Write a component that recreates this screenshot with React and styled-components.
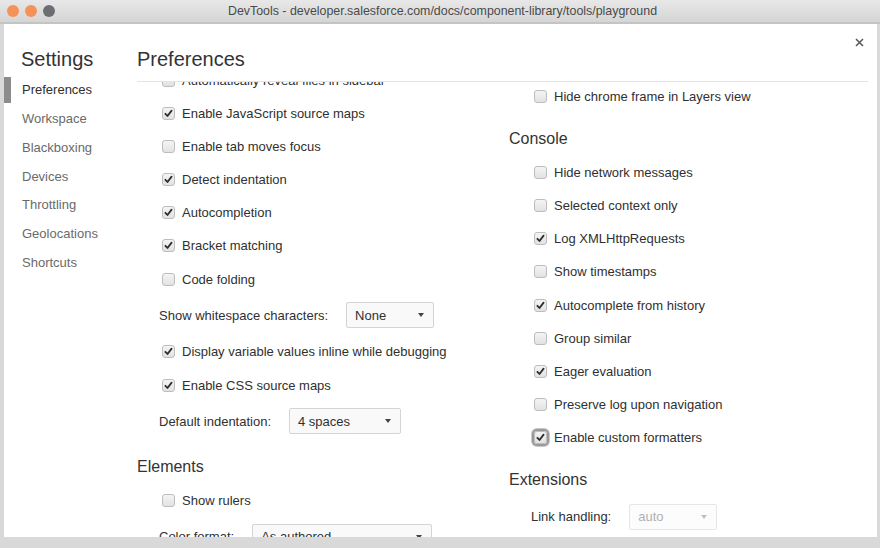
import React from 'react';
import styled, { createGlobalStyle } from 'styled-components';

const GlobalStyle = createGlobalStyle`
  html, body {
    margin: 0;
    padding: 0;
    background: #d8d8d8;
  }
  body {
    font-family: "Liberation Sans", Arial, Helvetica, sans-serif;
    color: #333;
  }
`;

const Window = styled.div`
  width: 880px;
  height: 548px;
  display: flex;
  flex-direction: column;
  background: #d9d9d9;
  overflow: hidden;
`;

const TitleBar = styled.div`
  height: 22px;
  flex: none;
  display: flex;
  align-items: center;
  background: linear-gradient(#e8e8e8, #d5d5d5);
  border-bottom: 2px solid #c4c4c4;
`;

const Lights = styled.div`
  display: flex;
  gap: 6px;
  padding-left: 7px;
`;

const Light = styled.span`
  width: 12px;
  height: 12px;
  border-radius: 50%;
  background: ${p => p.$color};
`;

const Title = styled.div`
  flex: 1;
  text-align: center;
  font-size: 12.4px;
  color: #4a4a4a;
  margin-right: 50px;
`;

const Frame = styled.div`
  flex: 1;
  display: flex;
  padding: 0 3px 11px 4px;
  min-height: 0;
`;

const Panel = styled.div`
  flex: 1;
  display: flex;
  background: #fff;
  position: relative;
  min-height: 0;
`;

const Close = styled.button`
  position: absolute;
  top: 13px;
  right: 13px;
  width: 10px;
  height: 10px;
  padding: 0;
  border: 0;
  background: none;
  display: flex;
  align-items: center;
  justify-content: center;
`;

const Sidebar = styled.nav`
  width: 133px;
  flex: none;
  display: flex;
  flex-direction: column;
`;

const SideTitle = styled.div`
  font-size: 20px;
  line-height: 24px;
  padding: 23px 0 0 17px;
  margin-bottom: 4.6px;
  color: #333;
`;

const SideItem = styled.div`
  height: 28.7px;
  display: flex;
  align-items: center;
  font-size: 13px;
  color: ${p => (p.$active ? '#303030' : '#6a6a6a')};
`;

const Marker = styled.span`
  width: 7px;
  height: 26px;
  margin-right: 11px;
  background: ${p => (p.$active ? '#8c8c8c' : 'transparent')};
`;

const Main = styled.main`
  flex: 1;
  display: flex;
  flex-direction: column;
  padding-right: 9px;
  min-width: 0;
`;

const Heading = styled.h1`
  margin: 0;
  font-size: 20px;
  font-weight: normal;
  line-height: 24px;
  padding: 23px 0 10px;
  border-bottom: 1px solid #e4e4e4;
  color: #333;
`;

const Scroll = styled.div`
  flex: 1;
  display: flex;
  overflow: hidden;
  min-height: 0;
`;

const Column = styled.div`
  width: ${p => p.$width || 'auto'};
  flex: ${p => (p.$width ? 'none' : '1')};
  margin-top: ${p => p.$offset}px;
  display: flex;
  flex-direction: column;
`;

const SectionTitle = styled.h2`
  margin: 0;
  font-size: 16px;
  font-weight: normal;
  line-height: 20px;
  padding: 16px 0 6.5px;
  color: #333;
`;

const CheckRow = styled.label`
  height: 33.2px;
  flex: none;
  display: flex;
  align-items: center;
  padding-left: 25px;
  font-size: 13px;
  color: #303030;
  white-space: nowrap;
`;

const Box = styled.span`
  width: 13px;
  height: 13px;
  box-sizing: border-box;
  border-radius: 3px;
  border: 1px solid #bdbdbd;
  background: linear-gradient(#f4f4f4, #e2e2e2);
  display: flex;
  align-items: center;
  justify-content: center;
  margin-right: 7px;
  flex: none;
  box-shadow: ${p => (p.$focused ? '0 0 0 2px #9a9a9a, 0 0 0 3px #c8c8c8' : 'none')};
`;

const SelectRow = styled.div`
  height: 39.5px;
  flex: none;
  display: flex;
  align-items: center;
  padding-left: 22px;
  gap: 18px;
  font-size: 13px;
  color: #303030;
  white-space: nowrap;
`;

const SelectBox = styled.div`
  width: ${p => p.$width}px;
  height: 26px;
  box-sizing: border-box;
  border: 1px solid ${p => (p.$disabled ? '#e6e6e6' : '#d4d4d4')};
  border-radius: 2px;
  background: ${p => (p.$disabled ? '#fcfcfc' : '#f9f9f9')};
  display: flex;
  align-items: center;
  justify-content: space-between;
  padding: 0 9px 0 8px;
  font-size: 13px;
  color: ${p => (p.$disabled ? '#b0b0b0' : '#303030')};
`;

const Arrow = styled.span`
  width: 0;
  height: 0;
  border-left: 3.5px solid transparent;
  border-right: 3.5px solid transparent;
  border-top: 4px solid ${p => (p.$disabled ? '#c0c0c0' : '#444')};
`;

function Check({ label, checked, focused }) {
  return (
    <CheckRow>
      <Box $focused={focused}>
        {checked && (
          <svg width="9" height="9" viewBox="0 0 9 9">
            <path d="M1.4 4.8 L3.5 7 L7.6 1.6" fill="none" stroke="#2e2e2e" strokeWidth="1.8" strokeLinecap="round" strokeLinejoin="round" />
          </svg>
        )}
      </Box>
      {label}
    </CheckRow>
  );
}

function Select({ label, value, width, disabled }) {
  return (
    <SelectRow>
      <span>{label}</span>
      <SelectBox $width={width} $disabled={disabled}>
        {value}
        <Arrow $disabled={disabled} />
      </SelectBox>
    </SelectRow>
  );
}

function renderItem(item, i) {
  if (item.header) return <SectionTitle key={i}>{item.header}</SectionTitle>;
  if (item.select) return <Select key={i} label={item.label} value={item.select} width={item.width} disabled={item.disabled} />;
  return <Check key={i} label={item.label} checked={item.checked} focused={item.focused} />;
}

const leftItems = [
  { label: 'Automatically reveal files in sidebar', checked: false },
  { label: 'Enable JavaScript source maps', checked: true },
  { label: 'Enable tab moves focus', checked: false },
  { label: 'Detect indentation', checked: true },
  { label: 'Autocompletion', checked: true },
  { label: 'Bracket matching', checked: true },
  { label: 'Code folding', checked: false },
  { label: 'Show whitespace characters:', select: 'None', width: 88 },
  { label: 'Display variable values inline while debugging', checked: true },
  { label: 'Enable CSS source maps', checked: true },
  { label: 'Default indentation:', select: '4 spaces', width: 112 },
  { header: 'Elements' },
  { label: 'Show rulers', checked: false },
  { label: 'Color format:', select: 'As authored', width: 180 },
];

const rightItems = [
  { label: 'Hide chrome frame in Layers view', checked: false },
  { header: 'Console' },
  { label: 'Hide network messages', checked: false },
  { label: 'Selected context only', checked: false },
  { label: 'Log XMLHttpRequests', checked: true },
  { label: 'Show timestamps', checked: false },
  { label: 'Autocomplete from history', checked: true },
  { label: 'Group similar', checked: false },
  { label: 'Eager evaluation', checked: true },
  { label: 'Preserve log upon navigation', checked: false },
  { label: 'Enable custom formatters', checked: true, focused: true },
  { header: 'Extensions' },
  { label: 'Link handling:', select: 'auto', width: 88, disabled: true },
];

const tabs = ['Preferences', 'Workspace', 'Blackboxing', 'Devices', 'Throttling', 'Geolocations', 'Shortcuts'];

export default function App() {
  return (
    <>
      <GlobalStyle />
      <Window>
        <TitleBar>
          <Lights>
            <Light $color="#f5925a" />
            <Light $color="#f5925a" />
            <Light $color="#6c6e71" />
          </Lights>
          <Title>DevTools - developer.salesforce.com/docs/component-library/tools/playground</Title>
        </TitleBar>
        <Frame>
          <Panel>
            <Sidebar>
              <SideTitle>Settings</SideTitle>
              {tabs.map((t, i) => (
                <SideItem key={t} $active={i === 0}>
                  <Marker $active={i === 0} />
                  {t}
                </SideItem>
              ))}
            </Sidebar>
            <Main>
              <Heading>Preferences</Heading>
              <Scroll>
                <Column $width="372px" $offset={-18.6}>
                  {leftItems.map(renderItem)}
                </Column>
                <Column $offset={-1.9}>
                  {rightItems.map(renderItem)}
                </Column>
              </Scroll>
            </Main>
            <Close aria-label="Close">
              <svg width="9" height="9" viewBox="0 0 9 9">
                <path d="M1 1 L8 8 M8 1 L1 8" stroke="#555" strokeWidth="1.5" />
              </svg>
            </Close>
          </Panel>
        </Frame>
      </Window>
    </>
  );
}
